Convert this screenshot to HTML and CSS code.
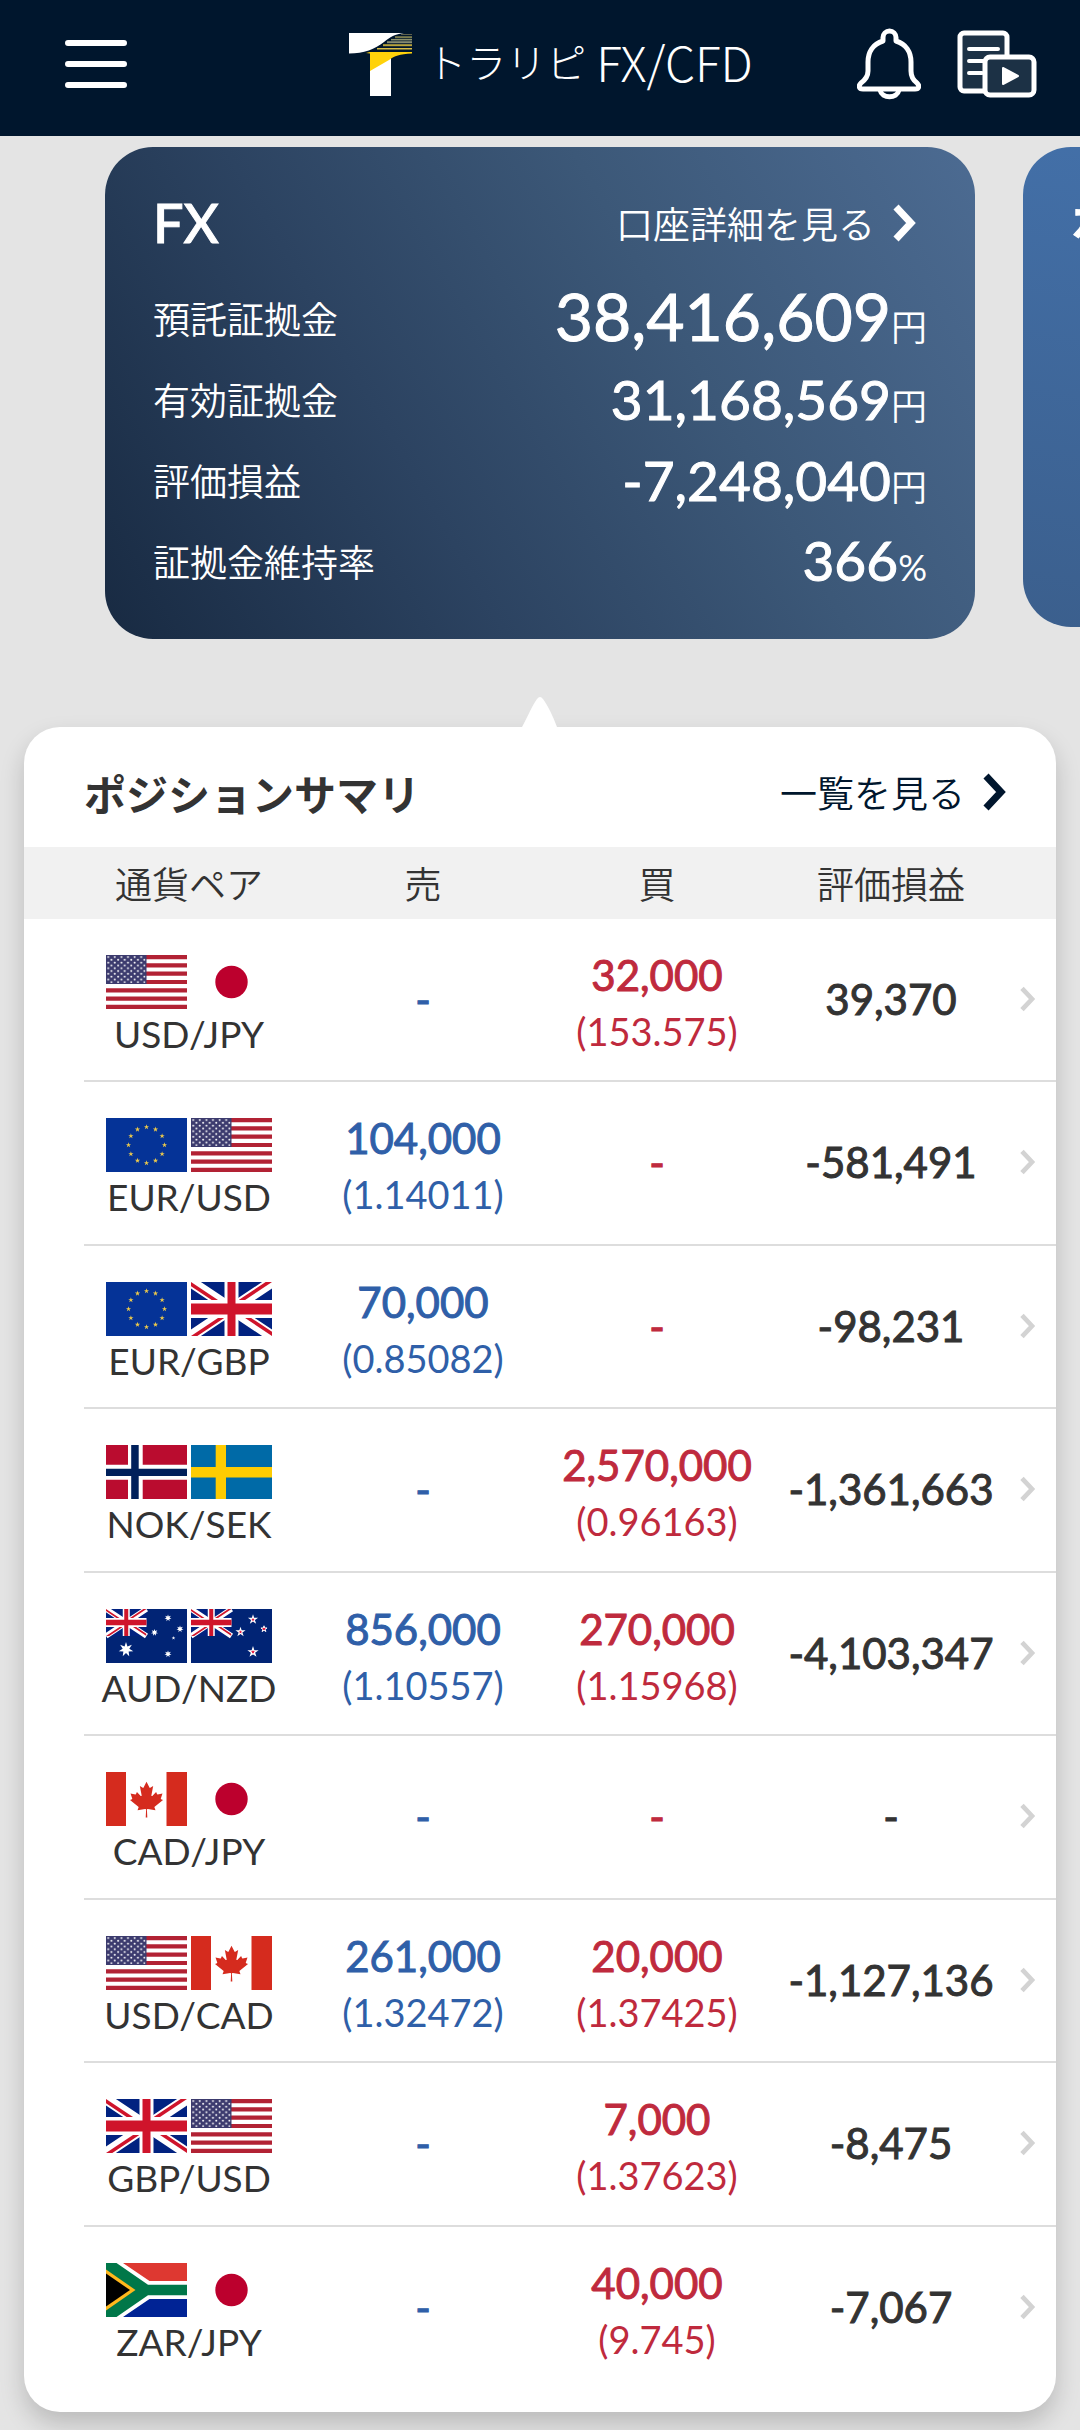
FILE: index.html
```html
<!DOCTYPE html>
<html lang="ja">
<head>
<meta charset="utf-8">
<meta name="viewport" content="width=device-width, initial-scale=1">
<title>トラリピ FX/CFD</title>
<link rel="stylesheet" href="styles.css">
</head>
<body>
<svg class="defs" width="0" height="0" aria-hidden="true">
  <defs>
    <clipPath id="saltire"><path d="M40.5 27H81V54zV54H0zH0V0zV0H81z"/></clipPath>
    <pattern id="stars" width="6.6" height="5.6" patternUnits="userSpaceOnUse" x="0.6" y="0.4">
      <circle cx="1.6" cy="1.6" r="1" fill="#fff"/><circle cx="4.9" cy="4.4" r="1" fill="#fff"/>
    </pattern>
    <polygon id="star5" points="0,-1 .225,-.309 .951,-.309 .363,.118 .588,.809 0,.382 -.588,.809 -.363,.118 -.951,-.309 -.225,-.309"/>
    <polygon id="star7" points="0,-1 .195,-.405 .782,-.623 .439,-.1 .975,.223 .352,.281 .434,.901 0,.45 -.434,.901 -.352,.281 -.975,.223 -.439,-.1 -.782,-.623 -.195,-.405"/>
    <g id="union">
      <path fill="#012280" d="M0 0h81v54H0z"/>
      <path stroke="#fff" stroke-width="11" d="M0 0l81 54M81 0L0 54"/>
      <path clip-path="url(#saltire)" stroke="#cf142b" stroke-width="7" d="M0 0l81 54M81 0L0 54"/>
      <path fill="#fff" d="M33.5 0h14v54h-14zM0 18h81v18H0z"/>
      <path fill="#cf142b" d="M36.500 0h8v54h-8zM0 21.500h81v11H0z"/>
    </g>
    <symbol id="gb" viewBox="0 0 81 54"><use href="#union"/></symbol>
    <symbol id="us" viewBox="0 0 81 54">
      <path fill="#fff" d="M0 0h81v54H0z"/>
      <path stroke="#b22234" stroke-width="4.150" d="M0 2.080h81M0 10.380h81M0 18.690h81M0 27h81M0 35.310h81M0 43.620h81M0 51.920h81"/>
      <path fill="#3c3b6e" d="M0 0h40.500v29H0z"/>
      <path fill="url(#stars)" d="M1 1h38.500v27H1z"/>
    </symbol>
    <symbol id="jp" viewBox="0 0 81 54"><path fill="#fff" d="M0 0h81v54H0z"/><circle cx="40.500" cy="27" r="16.200" fill="#bc002d"/></symbol>
    <symbol id="eu" viewBox="0 0 81 54">
      <path fill="#053397" d="M0 0h81v54H0z"/>
      <g fill="#ecc94b">
        <use href="#star5" transform="translate(40.500 9) scale(2.800)"/><use href="#star5" transform="translate(49.500 11.400) scale(2.800)"/>
        <use href="#star5" transform="translate(56.100 18) scale(2.800)"/><use href="#star5" transform="translate(58.500 27) scale(2.800)"/>
        <use href="#star5" transform="translate(56.100 36) scale(2.800)"/><use href="#star5" transform="translate(49.500 42.600) scale(2.800)"/>
        <use href="#star5" transform="translate(40.500 45) scale(2.800)"/><use href="#star5" transform="translate(31.500 42.600) scale(2.800)"/>
        <use href="#star5" transform="translate(24.900 36) scale(2.800)"/><use href="#star5" transform="translate(22.500 27) scale(2.800)"/>
        <use href="#star5" transform="translate(24.900 18) scale(2.800)"/><use href="#star5" transform="translate(31.500 11.400) scale(2.800)"/>
      </g>
    </symbol>
    <symbol id="no" viewBox="0 0 81 54">
      <path fill="#ba0c2f" d="M0 0h81v54H0z"/><path fill="#fff" d="M22 0h14.700v54H22zM0 19.700h81v15H0z"/>
      <path fill="#00205b" d="M25.200 0h7.500v54h-7.500zM0 23.800h81v7.200H0z"/>
    </symbol>
    <symbol id="se" viewBox="0 0 81 54"><path fill="#006aa7" d="M0 0h81v54H0z"/><path fill="#fecc02" d="M24.700 0H35v54H24.700zM0 22h81v10.600H0z"/></symbol>
    <symbol id="au" viewBox="0 0 81 54">
      <path fill="#012475" d="M0 0h81v54H0z"/><use href="#union" transform="scale(.5)"/>
      <g fill="#fff">
        <use href="#star7" transform="translate(20 40.500) scale(7.500)"/><use href="#star7" transform="translate(62 9) scale(3.600)"/>
        <use href="#star7" transform="translate(48.500 23.500) scale(3.600)"/><use href="#star7" transform="translate(74 20) scale(3.600)"/>
        <use href="#star5" transform="translate(67.500 29) scale(2)"/><use href="#star7" transform="translate(62 45) scale(3.600)"/>
      </g>
    </symbol>
    <symbol id="nz" viewBox="0 0 81 54">
      <path fill="#012475" d="M0 0h81v54H0z"/><use href="#union" transform="scale(.5)"/>
      <g fill="#e4002b" stroke="#fff" stroke-width=".3">
        <use href="#star5" transform="translate(62 10.500) scale(3.600)"/><use href="#star5" transform="translate(49.500 23) scale(3.600)"/>
        <use href="#star5" transform="translate(73 20) scale(3.200)"/><use href="#star5" transform="translate(62 43) scale(4)"/>
      </g>
    </symbol>
    <symbol id="ca" viewBox="0 0 81 54">
      <path fill="#fff" d="M0 0h81v54H0z"/><path fill="#d52b1e" d="M0 0h20v54H0zM60.500 0H81v54H60.500z"/>
      <path fill="#d52b1e" transform="translate(-2.060 6.200) scale(.00887)" d="m4890 4430-45-863a95 95 0 0 1 111-98l859 151-116-320a65 65 0 0 1 20-73l941-762-212-99a65 65 0 0 1-34-79l186-572-542 115a65 65 0 0 1-73-38l-105-247-423 454a65 65 0 0 1-111-57l204-1052-327 189a65 65 0 0 1-91-27l-332-652-332 652a65 65 0 0 1-91 27l-327-189 204 1052a65 65 0 0 1-111 57l-423-454-105 247a65 65 0 0 1-73 38l-542-115 186 572a65 65 0 0 1-34 79l-212 99 941 762a65 65 0 0 1 20 73l-116 320 859-151a95 95 0 0 1 111 98l-45 863z"/>
    </symbol>
    <symbol id="za" viewBox="0 0 81 54">
      <path fill="#de3831" d="M0 0h81v27H0z"/><path fill="#002395" d="M0 27h81v27H0z"/>
      <path fill="#fff" d="M0 0h17l26.500 18H81v18H43.500L17 54H0z"/><path fill="#007749" d="M0 0h10.500L42 21.700h39v10.600H42L10.500 54H0z"/>
      <path fill="#ffb81c" d="M0 6.500L29.500 27 0 47.500z"/><path d="M0 10.500L24 27 0 43.500z"/>
    </symbol>
    <symbol id="chevron" viewBox="0 0 24 38"><path fill="none" stroke="currentColor" stroke-width="7" d="M3 3l15 16L3 35"/></symbol>
  </defs>
</svg>

<header class="topbar">
  <button class="icon-button" type="button" aria-label="メニュー">
    <svg width="62" height="50" viewBox="0 0 62 50"><path stroke="#fff" stroke-width="6" stroke-linecap="round" d="M3 4h56M3 25h56M3 46h56"/></svg>
  </button>
  <a class="brand" href="#">
    <svg class="brand-mark" width="63" height="63" viewBox="0 0 63 63" aria-hidden="true">
      <path fill="#fff" d="M0 0h55C46 1 41 4 35 9 26 16 15 20.500 0 20.500zM21 20h21v43H21z"/>
      <path fill="#ffd20a" d="M17 20l4-1h42v1.500C50 21 46 23 40 27L21 38V20.500z"/>
      <path stroke="#5d604c" stroke-width="1" d="M52 1.500h11"/><path stroke="#7b7d4e" stroke-width="2" d="M46 4.200h17"/>
      <path stroke="#8c906c" stroke-width="1.500" d="M42 6.700h21"/><path stroke="#858a70" stroke-width="2" d="M38 9.200h25"/>
      <path stroke="#b8a33c" stroke-width="2" d="M34 12.200h29"/><path stroke="#d8bc45" stroke-width="1.500" d="M28 15.800h35"/>
    </svg>
    <span class="brand-kana">トラリピ</span><span class="brand-latin">FX/CFD</span>
  </a>
  <div class="tools">
    <button class="icon-button" type="button" aria-label="お知らせ">
      <svg width="64" height="72" viewBox="0 0 64 72"><path fill="none" stroke="#fff" stroke-width="5" stroke-linejoin="round" d="M26 13V9.500a6.500 6.500 0 0 1 13 0V13C49 16 54 24 54 34v9c0 6 2 9 6 12 3 3 2 6-2 6H6c-4 0-5-3-2-6 4-3 7-6 7-12v-9c0-10 5-18 15-21z"/><path fill="none" stroke="#fff" stroke-width="5" d="M23 62c2 9 17 9 19 0"/></svg>
    </button>
    <button class="icon-button" type="button" aria-label="動画・コンテンツ">
      <svg width="80" height="68" viewBox="0 0 80 68"><rect x="3" y="3" width="47" height="58" rx="4" fill="#1c3145" stroke="#fff" stroke-width="5"/><path stroke="#fff" stroke-width="4" stroke-linecap="round" d="M12 19h29M12 31h16M12 43h13"/><rect x="28" y="27" width="49" height="38" rx="5" fill="#1c3145" stroke="#fff" stroke-width="5"/><path fill="#fff" stroke="#fff" stroke-width="2" stroke-linejoin="round" d="M46 38v16l15-8z"/></svg>
    </button>
  </div>
</header>

<main>
  <section class="carousel" aria-label="口座">
    <article class="account">
      <div class="account-head">
        <h2 class="account-title">FX</h2>
        <a class="more more-light" href="#">口座詳細を見る<svg class="more-arrow" aria-hidden="true"><use href="#chevron"/></svg></a>
      </div>
      <dl class="figures">
        <div class="figure"><dt>預託証拠金</dt><dd class="amount amount-large">38,416,609<span class="unit">円</span></dd></div>
        <div class="figure"><dt>有効証拠金</dt><dd class="amount">31,168,569<span class="unit">円</span></dd></div>
        <div class="figure"><dt>評価損益</dt><dd class="amount">-7,248,040<span class="unit">円</span></dd></div>
        <div class="figure"><dt>証拠金維持率</dt><dd class="amount">366<span class="unit unit-latin">%</span></dd></div>
      </dl>
    </article>
    <article class="account account-next">
      <div class="account-head"><h2 class="account-title">ポイント</h2></div>
    </article>
  </section>

  <section class="summary">
    <svg class="summary-tip" width="36" height="30" viewBox="0 0 36 30" aria-hidden="true"><path fill="#fff" d="M0 30C6 19 10 9 15 2q3-4 6 0c5 7 10 17 14 28z"/></svg>
    <div class="summary-head">
      <h2 class="summary-title">ポジションサマリ</h2>
      <a class="more" href="#">一覧を見る<svg class="more-arrow" aria-hidden="true"><use href="#chevron"/></svg></a>
    </div>
    <table class="positions">
      <colgroup><col><col class="col-value"><col class="col-value"><col class="col-value"><col class="col-arrow"></colgroup>
      <thead><tr><th scope="col">通貨ペア</th><th scope="col">売</th><th scope="col">買</th><th scope="col">評価損益</th><td></td></tr></thead>
      <tbody>
        <tr><th scope="row"><span class="flags"><svg class="flag"><use href="#us"/></svg><svg class="flag"><use href="#jp"/></svg></span>USD/JPY</th><td class="sell">-</td><td class="buy">32,000<span class="rate">(153.575)</span></td><td>39,370</td><td class="go"><a href="#" aria-label="USD/JPYの詳細"><svg class="go-arrow"><use href="#chevron"/></svg></a></td></tr>
        <tr><th scope="row"><span class="flags"><svg class="flag"><use href="#eu"/></svg><svg class="flag"><use href="#us"/></svg></span>EUR/USD</th><td class="sell">104,000<span class="rate">(1.14011)</span></td><td class="buy">-</td><td>-581,491</td><td class="go"><a href="#" aria-label="EUR/USDの詳細"><svg class="go-arrow"><use href="#chevron"/></svg></a></td></tr>
        <tr><th scope="row"><span class="flags"><svg class="flag"><use href="#eu"/></svg><svg class="flag"><use href="#gb"/></svg></span>EUR/GBP</th><td class="sell">70,000<span class="rate">(0.85082)</span></td><td class="buy">-</td><td>-98,231</td><td class="go"><a href="#" aria-label="EUR/GBPの詳細"><svg class="go-arrow"><use href="#chevron"/></svg></a></td></tr>
        <tr><th scope="row"><span class="flags"><svg class="flag"><use href="#no"/></svg><svg class="flag"><use href="#se"/></svg></span>NOK/SEK</th><td class="sell">-</td><td class="buy">2,570,000<span class="rate">(0.96163)</span></td><td>-1,361,663</td><td class="go"><a href="#" aria-label="NOK/SEKの詳細"><svg class="go-arrow"><use href="#chevron"/></svg></a></td></tr>
        <tr><th scope="row"><span class="flags"><svg class="flag"><use href="#au"/></svg><svg class="flag"><use href="#nz"/></svg></span>AUD/NZD</th><td class="sell">856,000<span class="rate">(1.10557)</span></td><td class="buy">270,000<span class="rate">(1.15968)</span></td><td>-4,103,347</td><td class="go"><a href="#" aria-label="AUD/NZDの詳細"><svg class="go-arrow"><use href="#chevron"/></svg></a></td></tr>
        <tr><th scope="row"><span class="flags"><svg class="flag"><use href="#ca"/></svg><svg class="flag"><use href="#jp"/></svg></span>CAD/JPY</th><td class="sell">-</td><td class="buy">-</td><td>-</td><td class="go"><a href="#" aria-label="CAD/JPYの詳細"><svg class="go-arrow"><use href="#chevron"/></svg></a></td></tr>
        <tr><th scope="row"><span class="flags"><svg class="flag"><use href="#us"/></svg><svg class="flag"><use href="#ca"/></svg></span>USD/CAD</th><td class="sell">261,000<span class="rate">(1.32472)</span></td><td class="buy">20,000<span class="rate">(1.37425)</span></td><td>-1,127,136</td><td class="go"><a href="#" aria-label="USD/CADの詳細"><svg class="go-arrow"><use href="#chevron"/></svg></a></td></tr>
        <tr><th scope="row"><span class="flags"><svg class="flag"><use href="#gb"/></svg><svg class="flag"><use href="#us"/></svg></span>GBP/USD</th><td class="sell">-</td><td class="buy">7,000<span class="rate">(1.37623)</span></td><td>-8,475</td><td class="go"><a href="#" aria-label="GBP/USDの詳細"><svg class="go-arrow"><use href="#chevron"/></svg></a></td></tr>
        <tr><th scope="row"><span class="flags"><svg class="flag"><use href="#za"/></svg><svg class="flag"><use href="#jp"/></svg></span>ZAR/JPY</th><td class="sell">-</td><td class="buy">40,000<span class="rate">(9.745)</span></td><td>-7,067</td><td class="go"><a href="#" aria-label="ZAR/JPYの詳細"><svg class="go-arrow"><use href="#chevron"/></svg></a></td></tr>
      </tbody>
    </table>
  </section>
</main>
</body>
</html>
```
FILE: styles.css
```css
* { box-sizing: border-box; }

body {
  margin: 0;
  background: #e4e4e4;
  color: #333;
  font-family: Lato, "Noto Sans CJK JP", sans-serif;
  font-size: 37px;
  overflow-x: hidden;
}

h2, dl, dd { margin: 0; }
a { color: inherit; text-decoration: none; }
svg { display: block; }
.defs { position: absolute; }

/* Top bar */
.topbar {
  display: grid;
  grid-template-columns: 1fr auto 1fr;
  align-items: center;
  height: 136px;
  padding: 0 43px 8px 65px;
  background: #00162d;
  color: #fff;
}

.icon-button {
  justify-self: start;
  padding: 0;
  border: 0;
  background: none;
}

.brand { display: flex; align-items: center; }
.brand-mark { margin-right: 14px; }
.brand-kana, .brand-latin { padding-bottom: 6px; font: 300 40px/64px "Noto Sans CJK JP", sans-serif; }
.brand-latin { margin-left: 10px; font-size: 48px; }
.tools { display: flex; align-items: center; justify-content: flex-end; gap: 36px; }

/* Account cards */
.carousel {
  display: flex;
  align-items: flex-start;
  gap: 48px;
  padding: 11px 0 88px 105px;
  overflow: hidden;
}

.account {
  flex: 0 0 calc(100% - 105px);
  min-height: 480px;
  padding: 36px 48px 38px;
  border-radius: 48px;
  background: linear-gradient(60deg, #182a42, #2c4361 35%, #3c5878 65%, #4c6b92);
  color: #fff;
}

.account-next { background: linear-gradient(190deg, #4574af, #3b5f8d); }
.account-head { display: flex; align-items: center; justify-content: space-between; height: 80px; }
.account-title { font-weight: 500; font-size: 54px; line-height: 80px; white-space: nowrap; -webkit-text-stroke: 1px; }
.more { display: flex; align-items: center; color: #00162d; font-weight: 350; }
.more-light { padding-right: 10px; color: #fff; }
.more-arrow { width: 24px; height: 38px; margin-left: 18px; }
.figures { padding-top: 14px; }
.figure { display: flex; align-items: center; justify-content: space-between; height: 81px; }
.figure dt { font-weight: 350; }
.amount { padding-top: 6px; font-size: 55px; line-height: 75px; -webkit-text-stroke: 1px; }
.amount-large { font-size: 66px; }
.unit { font-family: "Noto Sans CJK JP", sans-serif; font-size: 36px; font-weight: 350; -webkit-text-stroke: 0; }
.unit-latin { font-family: Lato, sans-serif; font-weight: 400; }

/* Position summary */
.summary {
  position: relative;
  margin: 0 24px 18px;
  padding-bottom: 22px;
  border-radius: 36px;
  background: #fff;
  box-shadow: 0 12px 24px rgba(0, 0, 0, .18);
}

.summary-tip { position: absolute; bottom: 100%; left: calc(50% - 18px); }
.summary-head {
  display: flex;
  align-items: center;
  justify-content: space-between;
  height: 120px;
  padding: 10px 49px 0 60px;
}
.summary-title { font-size: 42px; font-weight: 700; }

.positions { width: 100%; table-layout: fixed; border-collapse: collapse; text-align: center; }
.col-value { width: 234px; }
.col-arrow { width: 48px; }
.positions th, .positions td { padding: 0; font-weight: 400; }
.positions th:first-child { padding-left: 48px; }
.positions thead tr { height: 72px; background: #f1f1f1; }
.positions thead th { font-weight: 350; }

.positions tbody tr { height: 164px; }
.positions tbody tr:nth-child(odd) { height: 163px; }
.positions tbody th { padding-top: 12px; line-height: 50px; }
.positions tbody td { padding-bottom: 4px; font-size: 42px; line-height: 56px; -webkit-text-stroke: 1px; }
.positions tbody td:has(.rate) { padding: 4px 0 0; }
.positions tbody tr:not(:last-child) > * {
  background: linear-gradient(#ddd, #ddd) 0 100% / 100% 2px no-repeat;
}
.positions tbody tr:not(:last-child) > th { background-position: 60px 100%; }

.flags { display: flex; justify-content: center; gap: 4px; }
.flag { width: 81px; height: 54px; }
.positions .sell { color: #2f5fa8; }
.positions .buy { color: #bf2a3d; }
.rate { display: block; font-size: 38px; -webkit-text-stroke: 0; }
.go a { display: block; padding-left: 12px; color: #d3d3d3; }
.go-arrow { width: 16px; height: 26px; }
```
